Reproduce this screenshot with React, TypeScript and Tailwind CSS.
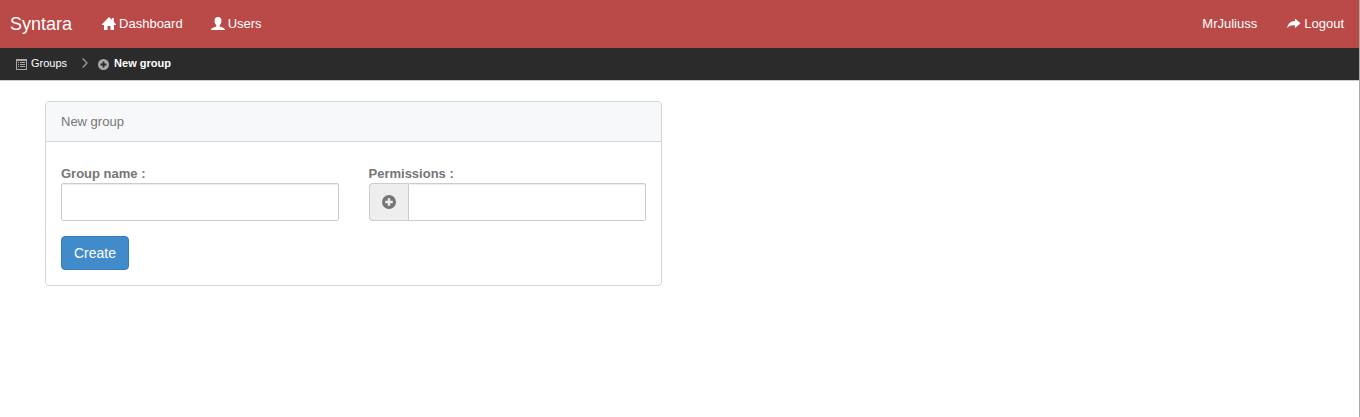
import type { ReactNode } from 'react';

type IconProps = { className?: string };

function Icon({ className = '', children }: IconProps & { children: ReactNode }) {
  return (
    <svg viewBox="0 0 14 14" fill="currentColor" aria-hidden="true" className={`shrink-0 ${className}`}>
      {children}
    </svg>
  );
}

function HomeIcon({ className }: IconProps) {
  return (
    <Icon className={className}>
      <path d="M7 0 9.800 2.800V1h2v3.800L14 7.300V8H12V13H8.500V9H5.500v4H2V8H0V7.300Z" />
    </Icon>
  );
}

function UserIcon({ className }: IconProps) {
  return (
    <Icon className={className}>
      <path d="M7 0c2.200 0 3.500 1.300 3.500 3.500 0 2-.8 3.700-1.800 4.700v1.300c1.700.7 3.800 1.200 4.600 2 .5.400.7.900.7 1.500H0c0-.6.2-1.100.7-1.500.8-.8 2.900-1.300 4.600-2V8.200C4.300 7.200 3.500 5.500 3.500 3.500 3.500 1.300 4.800 0 7 0Z" />
    </Icon>
  );
}

function ShareIcon({ className }: IconProps) {
  return (
    <Icon className={className}>
      <path d="M8 1.500 13.600 6.200 8 11V8.400C4.500 8.200 2.200 8.900.2 11 .8 6.800 3.400 4.200 8 4Z" />
    </Icon>
  );
}

function ListIcon({ className }: IconProps) {
  return (
    <svg viewBox="0 0 11 11" fill="currentColor" aria-hidden="true" className={`shrink-0 ${className}`}>
      <path fillRule="evenodd" d="M0 0h11v11H0ZM1 2v8h9V2Z" />
      <path d="M2 3h1v1H2ZM4 3h5v1H4ZM2 5h1v1H2ZM4 5h5v1H4ZM2 7h1v1H2ZM4 7h5v1H4Z" />
    </svg>
  );
}

function PlusIcon({ className }: IconProps) {
  return (
    <Icon className={className}>
      <path
        fillRule="evenodd"
        d="M7 0a7 7 0 1 1 0 14A7 7 0 0 1 7 0ZM5.800 3.200v2.600H3.200v2.400h2.600v2.600h2.400V8.200h2.600V5.800H8.200V3.200Z"
      />
    </Icon>
  );
}

function ChevronIcon() {
  return (
    <svg viewBox="0 0 6 10" fill="none" stroke="currentColor" strokeWidth="1.300" aria-hidden="true" className="h-2.5 w-1.5 shrink-0 text-[#999]">
      <path d="M.7.5 5 5 .7 9.500" />
    </svg>
  );
}

const navLink = 'flex items-center gap-[3px] text-[13px] leading-5 text-white';
const field = 'h-[38px] border border-[#ccc] bg-white px-3 text-sm text-[#555] shadow-[inset_0_1px_1px_rgba(0,0,0,0.075)] outline-none focus:border-[#66afe9]';

export default function App() {
  return (
    <div className="min-h-screen border-r border-[#aaa] bg-white font-['Liberation_Sans',Arial,sans-serif] text-[13px] text-[#767676]">
      <nav className="flex h-12 items-center bg-[#b94a48] pr-[15px] pl-2.5">
        <a href="#" className="text-lg leading-5 text-white">Syntara</a>
        <div className="ml-[30px] flex flex-1 gap-7">
          <a href="#dashboard" className={navLink}>
            <HomeIcon className="size-3.5" />
            Dashboard
          </a>
          <a href="#users" className={navLink}>
            <UserIcon className="size-3.5" />
            Users
          </a>
        </div>
        <div className="flex gap-[30px]">
          <a href="#profile" className={navLink}>MrJuliuss</a>
          <a href="#logout" className={navLink}>
            <ShareIcon className="size-3.5" />
            Logout
          </a>
        </div>
      </nav>

      <nav aria-label="Breadcrumb" className="border-b border-[#ccc] bg-[#2b2b2b] text-[11px] leading-4 text-white">
        <ol className="flex h-8 items-center px-4 pb-0.5">
          <li>
            <a href="#groups" className="flex items-center gap-1">
              <ListIcon className="size-[11px] translate-y-px text-[#aaa]" />
              Groups
            </a>
          </li>
          <li className="flex items-center gap-2.5 pl-[15px]">
            <ChevronIcon />
            <a href="#new" className="flex items-center gap-[5px] font-bold">
              <PlusIcon className="size-[11px] translate-y-px text-[#aaa]" />
              New group
            </a>
          </li>
        </ol>
      </nav>

      <main className="grid grid-cols-2 gap-[30px] pt-5 pr-[50px] pl-[45px]">
        <section className="rounded border border-[#d3d7db] bg-white">
          <h1 className="rounded-t-[3px] border-b border-[#d3d7db] bg-[#f6f8fa] px-[15px] py-2.5 leading-[19px]">
            New group
          </h1>
          <form className="px-[15px] pt-[22px] pb-[15px]" onSubmit={(e) => e.preventDefault()}>
            <div className="grid grid-cols-2 gap-[30px]">
              <div className="flex flex-col">
                <label htmlFor="name" className="leading-[19px] font-bold">Group name :</label>
                <input id="name" type="text" className={`${field} w-full rounded-xs`} />
              </div>
              <div className="flex flex-col">
                <label htmlFor="permissions" className="leading-[19px] font-bold">Permissions :</label>
                <div className="flex">
                  <button
                    type="button"
                    aria-label="Add permission"
                    className="flex w-[39px] shrink-0 items-center justify-center rounded-l border border-r-0 border-[#ccc] bg-[#eee]"
                  >
                    <PlusIcon className="size-3.5" />
                  </button>
                  <input id="permissions" type="text" className={`${field} min-w-0 flex-1 rounded-r-xs`} />
                </div>
              </div>
            </div>
            <button
              type="submit"
              className="mt-[15px] rounded border border-[#357ebd] bg-[#428bca] px-3 py-1.5 text-sm leading-5 text-white hover:bg-[#3276b1]"
            >
              Create
            </button>
          </form>
        </section>
      </main>
    </div>
  );
}
